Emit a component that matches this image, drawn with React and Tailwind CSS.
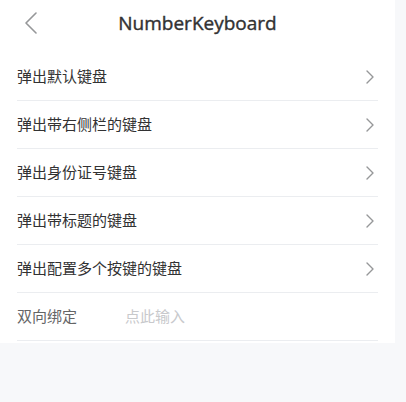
export default function App() {
  const rows = [
    "弹出默认键盘",
    "弹出带右侧栏的键盘",
    "弹出身份证号键盘",
    "弹出带标题的键盘",
    "弹出配置多个按键的键盘",
  ];
  const Chevron = () => (
    <svg width="10" height="16" viewBox="0 0 10 16" fill="none">
      <path d="M2 2 L8 8 L2 14" stroke="#969799" strokeWidth="1.4" strokeLinecap="round" strokeLinejoin="round" />
    </svg>
  );
  return (
    <div
      className="w-[406px] h-[402px] bg-[#f7f8fa] flex"
      style={{ fontFamily: '"Noto Sans", "Noto Sans CJK SC", sans-serif' }}
    >
      <div className="w-[395px] flex flex-col">
        <div className="bg-white">
          <div className="h-[46px] relative flex items-center justify-center">
            <svg className="absolute left-[24px] top-[12px]" width="14" height="22" viewBox="0 0 14 22" fill="none">
              <path d="M12 1 L2 11 L12 21" stroke="#969799" strokeWidth="1.6" strokeLinecap="round" strokeLinejoin="round" />
            </svg>
            <span
              className="text-[19px] font-normal text-[#323233] [-webkit-text-stroke:0.4px_#323233]"
              style={{ fontFamily: '"Open Sans", "Noto Sans", sans-serif' }}
            >
              NumberKeyboard
            </span>
          </div>
          <div className="h-[7px]" />
          {rows.map((r) => (
            <div key={r} className="mx-[17px] h-[48px] flex items-center justify-between border-b border-[#ebedf0]">
              <span className="text-[15px] text-[#323233]">{r}</span>
              <span className="mr-[3px]">
                <Chevron />
              </span>
            </div>
          ))}
          <div className="mx-[17px] h-[48px] flex items-center border-b border-[#ebedf0]">
            <span className="w-[108px] text-[15px] text-[#646566]">双向绑定</span>
            <span className="text-[15px] text-[#c8c9cc]">点此输入</span>
          </div>
          <div className="h-[2px]" />
        </div>
      </div>
    </div>
  );
}
